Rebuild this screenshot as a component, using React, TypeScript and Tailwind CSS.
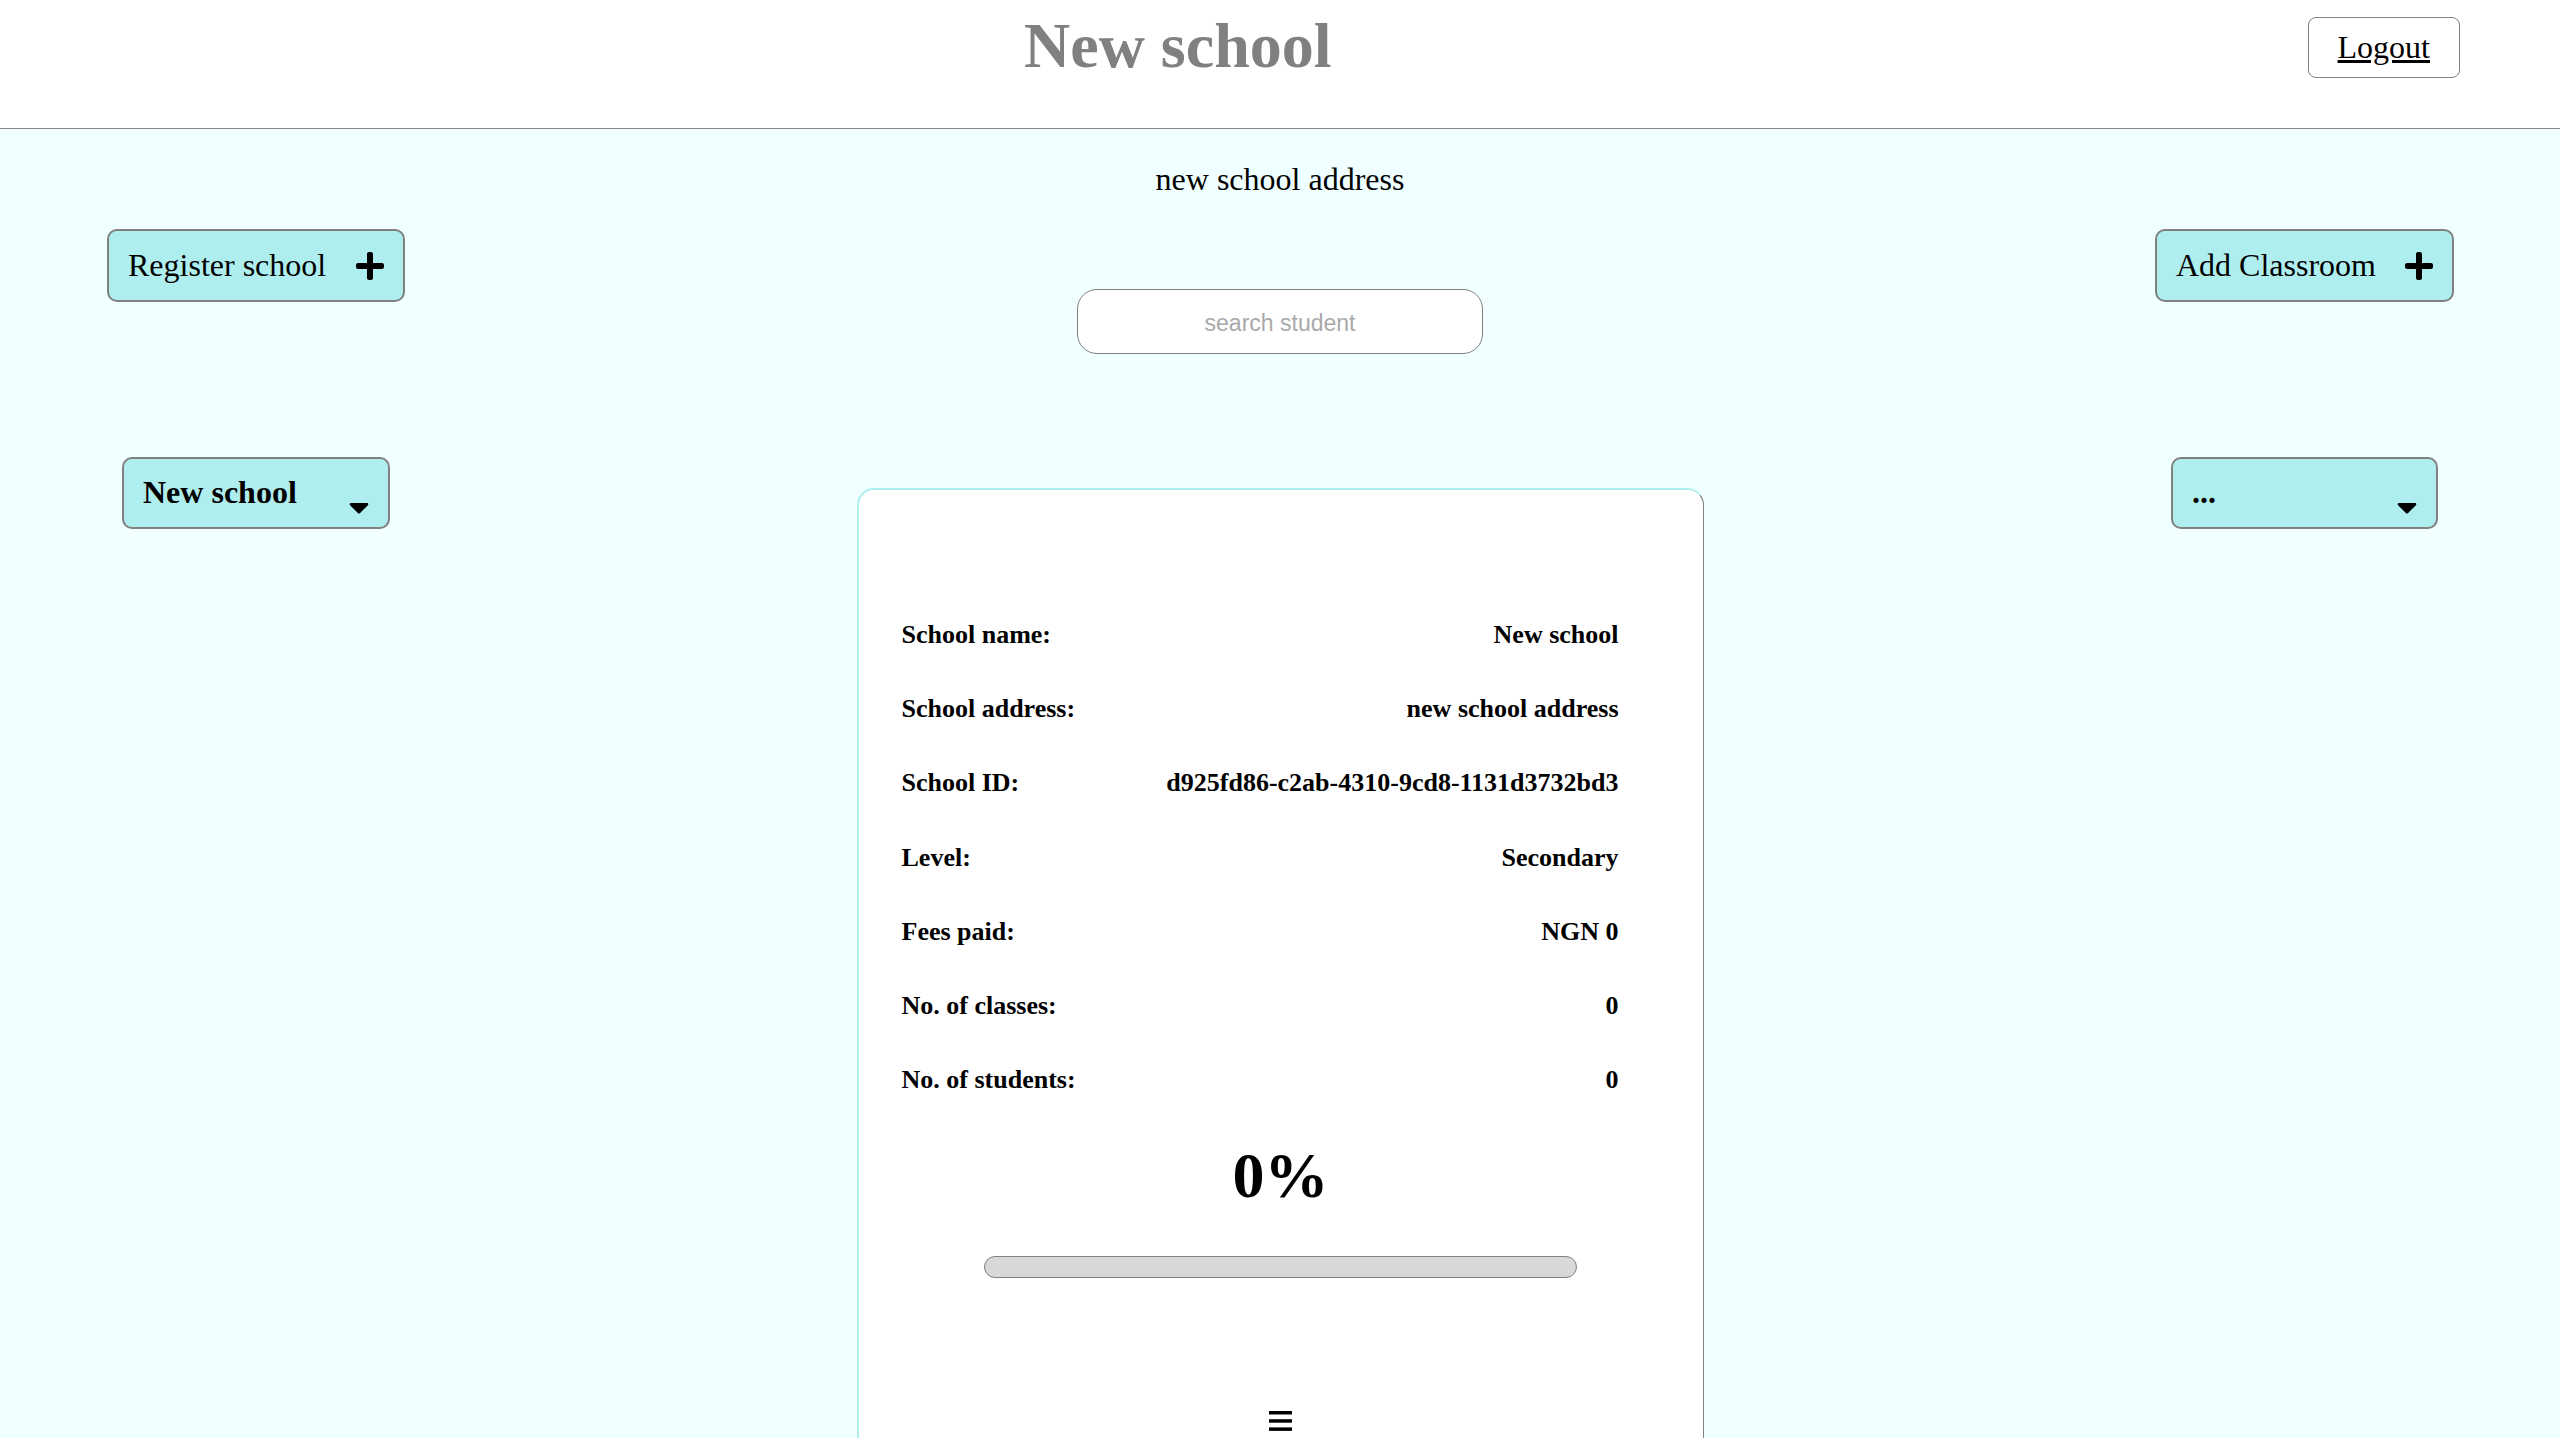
import React from 'react';
import { FaPlus, FaCaretDown } from 'react-icons/fa';

const serif = "font-['Liberation_Serif',_'Times_New_Roman',_serif]";

const details: { label: string; value: string }[] = [
  { label: 'School name:', value: 'New school' },
  { label: 'School address:', value: 'new school address' },
  { label: 'School ID:', value: 'd925fd86-c2ab-4310-9cd8-1131d3732bd3' },
  { label: 'Level:', value: 'Secondary' },
  { label: 'Fees paid:', value: 'NGN 0' },
  { label: 'No. of classes:', value: '0' },
  { label: 'No. of students:', value: '0' },
];

const ActionButton: React.FC<{ label: string }> = ({ label }) => (
  <button className="w-full h-[73px] flex items-center justify-between px-[19px] bg-[#afeeee] border-2 border-[#808080] rounded-[10px] text-[32px] leading-[37px] text-black">
    <span>{label}</span>
    <FaPlus className="w-[28px] h-[32px]" />
  </button>
);

const Dropdown: React.FC<{ label: string; width: string }> = ({ label, width }) => (
  <button className={`${width} h-[72px] flex items-start justify-between px-[19px] bg-[#afeeee] border-2 border-[#808080] rounded-[10px] text-black`}>
    <span className="mt-[15px] text-[32px] leading-[37px] font-bold">{label}</span>
    <FaCaretDown className="mt-[32px] w-[20px] h-[32px]" />
  </button>
);

const HamburgerIcon = () => (
  <svg width="23" height="20" viewBox="0 0 23 20" aria-hidden="true">
    <rect x="0" y="0" width="23" height="3.5" fill="#000" />
    <rect x="0" y="8.2" width="23" height="3.5" fill="#000" />
    <rect x="0" y="16.4" width="23" height="3.5" fill="#000" />
  </svg>
);

export default function App() {
  return (
    <div className={`${serif} min-h-screen bg-[#f0ffff] text-black`}>
      <header className="h-[129px] flex items-start bg-white border-b border-[#888888] pr-[100px]">
        <div className="flex-1 pl-[48px] pt-[9px] text-center">
          <h1 className="text-[64px] leading-[74px] font-bold text-[#808080]">New school</h1>
        </div>
        <button className="mt-[17px] h-[61px] px-[29px] bg-white border border-[#808080] rounded-[8px] text-[32px] leading-[37px] underline">
          Logout
        </button>
      </header>

      <main className="flex justify-between pl-[107px] pr-[106px]">
        <aside className="w-[298px] flex flex-col items-center pt-[100px]">
          <ActionButton label="Register school" />
          <div className="mt-[155px]">
            <Dropdown label="New school" width="w-[268px]" />
          </div>
        </aside>

        <section className="w-[847px] flex flex-col items-center pt-[32px]">
          <p className="text-[32px] leading-[37px]">new school address</p>
          <input
            type="text"
            placeholder="search student"
            className="mt-[91px] w-[406px] h-[65px] pt-[4px] bg-white border border-[#808080] rounded-[20px] text-center text-[23px] font-['Liberation_Sans',_Arial,_sans-serif] placeholder:text-[#a9a9a9] outline-none"
          />

          <div className="mt-[134px] w-full bg-white border-t-2 border-l-2 border-r border-b border-t-[#afeeee] border-l-[#afeeee] border-r-[#808080] border-b-[#808080] rounded-[17px] pt-[130px] pb-[60px] flex flex-col items-center">
            <div className="w-full pl-[43px] pr-[84px] flex flex-col gap-[44.2px]">
              {details.map((d) => (
                <div key={d.label} className="flex justify-between text-[26px] leading-[30px] font-bold">
                  <span>{d.label}</span>
                  <span>{d.value}</span>
                </div>
              ))}
            </div>

            <p className="mt-[44px] text-[64px] leading-[74px] font-bold">0%</p>

            <div className="mt-[43px] w-[593px] h-[22px] rounded-full bg-[#dad7d7] border border-[#808080]" />

            <div className="mt-[133px] flex justify-center">
              <HamburgerIcon />
            </div>
          </div>
        </section>

        <aside className="w-[299px] flex flex-col items-center pt-[100px]">
          <ActionButton label="Add Classroom" />
          <div className="mt-[155px]">
            <Dropdown label="..." width="w-[267px]" />
          </div>
        </aside>
      </main>
    </div>
  );
}
